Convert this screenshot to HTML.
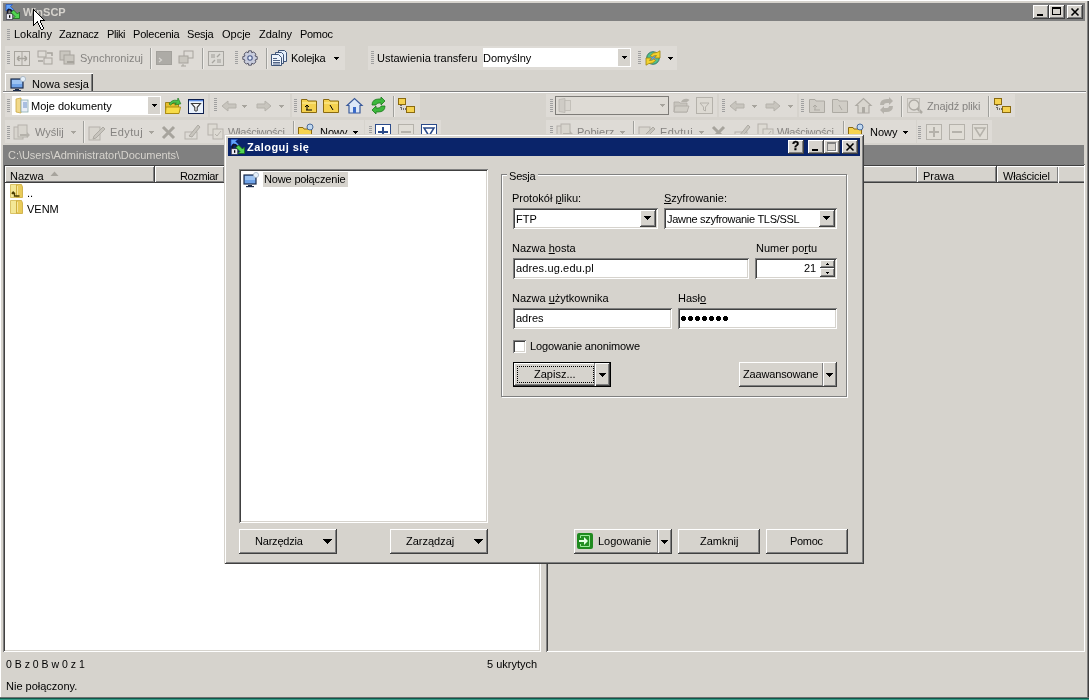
<!DOCTYPE html>
<html><head><meta charset="utf-8">
<style>
*{box-sizing:border-box;margin:0;padding:0}
html,body{width:1089px;height:700px;overflow:hidden;background:#D6D3CD;font-family:"Liberation Sans",sans-serif;font-size:11px;color:#000}
.a{position:absolute}
.t{position:absolute;white-space:nowrap;line-height:13px;will-change:transform}
.raised{position:absolute;background:#D6D3CD;box-shadow:inset -1px -1px #404040,inset 1px 1px #fff,inset -2px -2px #808080,inset 2px 2px #D6D3CD}
.sunk{position:absolute;background:#fff;box-shadow:inset 1px 1px #808080,inset -1px -1px #fff,inset 2px 2px #404040,inset -2px -2px #D6D3CD}
.g{color:#858380}
.grip{position:absolute;width:3px;background:repeating-linear-gradient(#A0A0A0 0 1px,transparent 1px 2px)}
.vsep{position:absolute;width:2px;border-left:1px solid #A0A09C;border-right:1px solid #EEECE8}
.tb{position:absolute;background:#DEDBD6}
.arr{position:absolute;width:0;height:0;border-left:3px solid transparent;border-right:3px solid transparent;border-top:3px solid #000}
.arrg{position:absolute;width:0;height:0;border-left:3px solid transparent;border-right:3px solid transparent;border-top:3px solid #A7A49D}
.arr7{position:absolute;width:0;height:0;border-left:3.5px solid transparent;border-right:3.5px solid transparent;border-top:4px solid #000}
.hdr{position:absolute;background:#D6D3CD;box-shadow:inset -1px -1px #404040,inset 1px 1px #fff,inset -2px -2px #808080}
svg{position:absolute;overflow:visible}
</style></head><body>
<!-- window frame -->
<div class="a" style="left:0;top:0;width:1089px;height:700px;box-shadow:inset 1px 1px #fff,inset -1px 0 #404040,inset -2px 0 #808080"></div>
<!-- title bar -->
<div class="a" style="left:3px;top:3px;width:1082px;height:18px;background:#808080"></div>
<svg style="left:5px;top:4px" width="16" height="16" viewBox="0 0 16 16"><path d="M1 0.5 L7.5 0.5 L5.5 2.5 L8.5 5.5 L6.5 7.5 L3.5 4.5 L1 7Z" fill="#62A4FA" stroke="#2050C0" stroke-width="0.7"/><path d="M2.5 10 V8 Q2.5 5.5 4.5 5.5 Q6.5 5.5 6.5 8 V10" stroke="#141428" stroke-width="1.6" fill="none"/><rect x="1.3" y="9.8" width="6.4" height="5.6" fill="#ECECF6" stroke="#2a2a3a" stroke-width="0.6"/><rect x="4" y="11.2" width="1.3" height="2.6" fill="#000"/><path d="M8.5 6 L12.5 10 L14.5 8 L14.5 14.5 L8 14.5 L10 12.5 L6 8.5Z" fill="#52D452" stroke="#1A6A1A" stroke-width="0.8"/></svg>
<div class="t" style="left:23px;top:6px;font-weight:bold;font-size:11px;color:#D6D3CD">WinSCP</div>
<div class="raised" style="left:1033px;top:5px;width:16px;height:14px"></div>
<div class="a" style="left:1037px;top:14px;width:6px;height:2px;background:#000"></div>
<div class="raised" style="left:1049px;top:5px;width:16px;height:14px"></div>
<div class="a" style="left:1052px;top:7px;width:9px;height:8px;border:1px solid #000;border-top-width:2px"></div>
<div class="raised" style="left:1067px;top:5px;width:16px;height:14px"></div>
<svg style="left:1067px;top:5px" width="16" height="14"><path d="M4.5 3.5 L11.5 10.5 M11.5 3.5 L4.5 10.5" stroke="#000" stroke-width="1.6"/></svg>


<!-- menu -->
<div class="grip" style="left:7px;top:29px;height:11px"></div>
<div class="t" style="left:14px;top:28px">Lokalny</div>
<div class="t" style="left:59px;top:28px;letter-spacing:-0.25px">Zaznacz</div>
<div class="t" style="left:107px;top:28px;letter-spacing:-0.42px">Pliki</div>
<div class="t" style="left:133px;top:28px;letter-spacing:-0.2px">Polecenia</div>
<div class="t" style="left:187px;top:28px;letter-spacing:-0.2px">Sesja</div>
<div class="t" style="left:222px;top:28px">Opcje</div>
<div class="t" style="left:259px;top:28px">Zdalny</div>
<div class="t" style="left:300px;top:28px;letter-spacing:-0.3px">Pomoc</div>

<!-- main toolbar -->
<div class="tb" style="left:5px;top:46px;width:340px;height:24px"></div>
<div class="grip" style="left:7px;top:51px;height:13px"></div>
<svg style="left:14px;top:51px" width="16" height="15"><rect x="0.5" y="0.5" width="15" height="14" fill="none" stroke="#A7A49D"/><path d="M8 1 V14" stroke="#A7A49D"/><path d="M3 7.5 H13 M3 7.5 L5.5 5 M3 7.5 L5.5 10 M13 7.5 L10.5 5 M13 7.5 L10.5 10" stroke="#A7A49D" stroke-width="1.5" fill="none"/></svg>
<svg style="left:37px;top:50px" width="17" height="16"><rect x="1" y="1" width="8" height="6" fill="none" stroke="#A7A49D"/><rect x="7" y="8" width="8" height="6" fill="none" stroke="#A7A49D"/><path d="M10 3 H15 V6 M1 11 H6" stroke="#A7A49D" stroke-width="1.5" fill="none"/></svg>
<svg style="left:59px;top:50px" width="17" height="16"><rect x="1" y="1" width="10" height="9" fill="#C9C6BF" stroke="#A7A49D"/><rect x="5" y="5" width="10" height="9" fill="#C9C6BF" stroke="#A7A49D"/><path d="M8 12 L15 12" stroke="#A7A49D" stroke-width="2"/></svg>
<div class="t g" style="left:80px;top:52px">Synchronizuj</div>
<div class="vsep" style="left:150px;top:48px;height:21px"></div>
<svg style="left:156px;top:51px" width="16" height="14"><rect x="0" y="0" width="16" height="14" fill="#ADABA6"/><rect x="0.5" y="0.5" width="15" height="13" fill="none" stroke="#A3A19C"/><path d="M3 7 L5.5 9 L3 11" stroke="#D8D6D2" stroke-width="1.2" fill="none"/></svg>
<svg style="left:178px;top:50px" width="17" height="16"><rect x="6" y="1" width="9" height="7" fill="none" stroke="#A7A49D"/><rect x="1" y="6" width="9" height="7" fill="#C9C6BF" stroke="#A7A49D"/><path d="M5 14 V16 M3 16 H8" stroke="#A7A49D"/></svg>
<div class="vsep" style="left:202px;top:48px;height:21px"></div>
<svg style="left:208px;top:51px" width="16" height="15"><rect x="0.5" y="0.5" width="15" height="14" fill="#DCDAD5" stroke="#A7A5A0"/><path d="M3 3 H7 V7 H3Z M9 8 H13 V12 H9Z" fill="#BDBBB6"/><path d="M4 12 L7 9 M9 6 L12 3" stroke="#A7A5A0" stroke-width="1.4"/></svg>
<div class="grip" style="left:235px;top:51px;height:13px"></div>
<svg style="left:242px;top:50px" width="16" height="16" viewBox="0 0 16 16"><path d="M6.6 0.8 H9.4 L9.8 2.8 L11.7 1.9 L13.9 4.1 L13 6 L15.2 6.6 V9.4 L13 10 L13.9 11.9 L11.7 14.1 L9.8 13.2 L9.4 15.2 H6.6 L6.2 13.2 L4.3 14.1 L2.1 11.9 L3 10 L0.8 9.4 V6.6 L3 6 L2.1 4.1 L4.3 1.9 L6.2 2.8Z" fill="#C9CDDD" stroke="#4C4C5E" stroke-width="0.9"/><circle cx="8" cy="8" r="2.2" fill="#E4ECFA" stroke="#4A5A8A" stroke-width="1.1"/></svg>
<div class="vsep" style="left:266px;top:48px;height:21px"></div>
<svg style="left:271px;top:50px" width="17" height="16" viewBox="0 0 17 16"><path d="M7.5 0.5 H13.5 L15.5 2.5 V11.5 H7.5Z" fill="#E4EEFA" stroke="#3E5478"/><path d="M4.5 2.5 H10.5 L12.5 4.5 V13.5 H4.5Z" fill="#E8F0FB" stroke="#3E5478"/><path d="M0.5 4.5 H7.5 L10.5 7.5 V15.5 H0.5Z" fill="#EEF4FC" stroke="#3E5478"/><path d="M2 8.5 H6 M2 10.5 H9 M2 12.5 H9 M2 14 H9" stroke="#3E5478" stroke-width="0.9"/></svg>
<div class="t" style="left:291px;top:52px;letter-spacing:-0.25px">Kolejka</div>
<svg style="left:334px;top:57px" width="5" height="3" shape-rendering="crispEdges"><g fill="#000"><rect x="0" y="0" width="5" height="1"/><rect x="1" y="1" width="3" height="1"/><rect x="2" y="2" width="1" height="1"/></g></svg>

<div class="tb" style="left:368px;top:46px;width:309px;height:24px"></div>
<div class="grip" style="left:371px;top:51px;height:13px"></div>
<div class="t" style="left:377px;top:52px">Ustawienia transferu</div>
<div class="a" style="left:483px;top:48px;width:148px;height:19px;background:#fff"></div>
<div class="a" style="left:618px;top:49px;width:12px;height:17px;background:#D6D3CD"></div>
<svg style="left:622px;top:56px" width="5" height="3" shape-rendering="crispEdges"><g fill="#000"><rect x="0" y="0" width="5" height="1"/><rect x="1" y="1" width="3" height="1"/><rect x="2" y="2" width="1" height="1"/></g></svg>
<div class="t" style="left:483px;top:52px">Domyślny</div>
<div class="grip" style="left:638px;top:51px;height:13px"></div>
<svg style="left:645px;top:50px" width="16" height="16" viewBox="0 0 16 16"><circle cx="8" cy="8" r="6.3" fill="#52C08A" stroke="#2E6E64" stroke-width="0.9"/><ellipse cx="8.2" cy="8.3" rx="2.8" ry="3.8" fill="#5AA2F0" transform="rotate(25 8 8)"/><path d="M5.5 5.5 Q8 2.2 12.5 2.3 L15 0.8 V8 H9.5 L11.5 5.6 Q8.5 5.4 7 7.2Z" fill="#F4D22E" stroke="#9C8410" stroke-width="0.8"/><path d="M10.5 10.5 Q8 13.8 3.5 13.7 L1 15.2 V8 H6.5 L4.5 10.4 Q7.5 10.6 9 8.8Z" fill="#F4D22E" stroke="#9C8410" stroke-width="0.8"/></svg>
<svg style="left:668px;top:57px" width="5" height="3" shape-rendering="crispEdges"><g fill="#000"><rect x="0" y="0" width="5" height="1"/><rect x="1" y="1" width="3" height="1"/><rect x="2" y="2" width="1" height="1"/></g></svg>

<!-- tabs -->
<div class="a" style="left:5px;top:73px;width:88px;height:18px;background:#D6D3CD;box-shadow:inset 1px 1px #fff,inset -1px 0 #404040,inset -2px 0 #808080"></div>
<svg style="left:10px;top:76px" width="18" height="16" viewBox="0 0 18 16"><rect x="1" y="3" width="12" height="9" fill="#6FA3E8" stroke="#1B2B4A" stroke-width="1.2"/><rect x="2" y="4" width="10" height="4" fill="#9CC3F2"/><rect x="5" y="13" width="4" height="1" fill="#1B2B4A"/><rect x="3" y="14" width="8" height="1.2" fill="#1B2B4A"/><circle cx="13" cy="3" r="2.6" fill="#E6F0FA" stroke="#9AB" stroke-width=".7"/></svg>
<div class="t" style="left:32px;top:78px">Nowa sesja</div>
<div class="a" style="left:3px;top:91px;width:1083px;height:1px;background:#808080"></div>
<div class="a" style="left:3px;top:92px;width:1083px;height:1px;background:#fff"></div>


<!-- local panel toolbars -->
<div class="tb" style="left:5px;top:94px;width:203px;height:23px"></div>
<div class="grip" style="left:7px;top:99px;height:13px"></div>
<div class="a" style="left:12px;top:96px;width:149px;height:19px;background:#fff"></div>
<div class="a" style="left:148px;top:97px;width:12px;height:17px;background:#D6D3CD"></div>
<svg style="left:152px;top:104px" width="5" height="3" shape-rendering="crispEdges"><g fill="#000"><rect x="0" y="0" width="5" height="1"/><rect x="1" y="1" width="3" height="1"/><rect x="2" y="2" width="1" height="1"/></g></svg>
<svg style="left:15px;top:97px" width="14" height="17" viewBox="0 0 14 17"><path d="M1 2 L6 1 L6 16 L1 15Z" fill="#F2D98A" stroke="#C9A640" stroke-width=".8"/><rect x="6" y="3" width="7" height="12" fill="#E8EEF8" stroke="#8AA" stroke-width=".8"/><path d="M8 6H12M8 8H12M8 10H12" stroke="#6A8FC8"/></svg>
<div class="t" style="left:31px;top:100px">Moje dokumenty</div>
<svg style="left:165px;top:97px" width="17" height="17" viewBox="0 0 17 17"><path d="M0.5 5.5 L5 5.5 L6 6.5 L13.5 6.5 L13.5 16.5 L0.5 16.5Z" fill="#E6BE2E" stroke="#9A7A10" stroke-width="0.9"/><path d="M1 10 L15.5 10 L14 16.5 L0.5 16.5Z" fill="#F8DC48" stroke="#A8880F" stroke-width="0.9"/><path d="M4 7 Q7 2 12.5 3.5 L13 1 L15.8 6.8 L9.8 8 L11.3 5.8 Q8 5 5.5 8Z" fill="#4CC04C" stroke="#1E7A1E" stroke-width="0.7"/></svg>
<svg style="left:188px;top:99px" width="16" height="15" viewBox="0 0 16 15"><rect x="0.5" y="0.5" width="15" height="14" fill="#EAF2FC" stroke="#0C1E4E"/><rect x="1" y="1" width="14" height="1.3" fill="#5A8AE0"/><path d="M3.5 4.5 H12.5 L9.2 8.3 V11.5 Q8 12.8 6.8 11.5 V8.3Z" fill="#FAFAFA" stroke="#3a3a3a" stroke-width="1.1"/></svg>
<div class="tb" style="left:210px;top:94px;width:80px;height:23px"></div>
<div class="grip" style="left:214px;top:98px;height:13px"></div>
<svg style="left:221px;top:100px" width="16" height="12"><path d="M1 6 L7 1 L7 4 L15 4 L15 8 L7 8 L7 11Z" fill="#C8C5BE" stroke="#B5B2AB"/></svg>
<svg style="left:242px;top:105px" width="5" height="3" shape-rendering="crispEdges"><g fill="#A7A49D"><rect x="0" y="0" width="5" height="1"/><rect x="1" y="1" width="3" height="1"/><rect x="2" y="2" width="1" height="1"/></g></svg>
<svg style="left:256px;top:100px" width="16" height="12"><path d="M15 6 L9 1 L9 4 L1 4 L1 8 L9 8 L9 11Z" fill="#C8C5BE" stroke="#B5B2AB"/></svg>
<svg style="left:279px;top:105px" width="5" height="3" shape-rendering="crispEdges"><g fill="#A7A49D"><rect x="0" y="0" width="5" height="1"/><rect x="1" y="1" width="3" height="1"/><rect x="2" y="2" width="1" height="1"/></g></svg>
<div class="tb" style="left:292px;top:94px;width:128px;height:23px"></div>
<div class="grip" style="left:294px;top:99px;height:13px"></div>
<svg style="left:301px;top:98px" width="16" height="15" viewBox="0 0 16 15"><path d="M0.5 1.5 L6 1.5 L7 3 L15.5 3 L15.5 14.5 L0.5 14.5Z" fill="#F5D250" stroke="#8A6A10"/><path d="M1 5 H15" stroke="#FFF0A0"/><path d="M5 12 H11 M6 8 L6 12 M4 9 L6 7 L8 9" stroke="#000" fill="none"/></svg>
<svg style="left:323px;top:98px" width="16" height="15" viewBox="0 0 16 15"><path d="M0.5 1.5 L6 1.5 L7 3 L15.5 3 L15.5 14.5 L0.5 14.5Z" fill="#F5D250" stroke="#8A6A10"/><path d="M1 5 H15" stroke="#FFF0A0"/><path d="M7 7 L10 12" stroke="#000"/></svg>
<svg style="left:346px;top:97px" width="17" height="17" viewBox="0 0 17 17"><path d="M1 8.5 L8.5 1.5 L16 8.5 L14 8.5 L14 16 L3 16 L3 8.5Z" fill="#DDE8F8" stroke="#3A5A9A" stroke-width="1.2"/><rect x="7" y="10" width="3" height="6" fill="#3A6AC8"/></svg>
<svg style="left:370px;top:97px" width="17" height="17" viewBox="0 0 17 17"><path d="M2 8 Q2 2 9 2 L11 2 L11 0 L15 4 L11 8 L11 6 L9 6 Q6 6 6 8Z" fill="#3CB83C" stroke="#1A7A1A" stroke-width=".8"/><path d="M15 9 Q15 15 8 15 L6 15 L6 17 L2 13 L6 9 L6 11 L8 11 Q11 11 11 9Z" fill="#3CB83C" stroke="#1A7A1A" stroke-width=".8"/></svg>
<div class="vsep" style="left:393px;top:96px;height:21px"></div>
<svg style="left:398px;top:98px" width="17" height="16" viewBox="0 0 17 16"><rect x="0.5" y="0.5" width="7" height="6" fill="#F5D250" stroke="#8A6A10"/><rect x="8.5" y="8.5" width="8" height="6" fill="#F5D250" stroke="#8A6A10"/><path d="M3 7 V11 H8" stroke="#000" stroke-dasharray="1 1" fill="none"/></svg>

<div class="tb" style="left:5px;top:120px;width:359px;height:23px"></div>
<div class="tb" style="left:365px;top:120px;width:76px;height:23px"></div>
<div class="grip" style="left:7px;top:126px;height:13px"></div>
<svg style="left:13px;top:124px" width="17" height="17" viewBox="0 0 17 17"><rect x="1" y="3" width="9" height="12" fill="#D8D5CE" stroke="#B5B2AB"/><rect x="5" y="1" width="9" height="12" fill="#D8D5CE" stroke="#B5B2AB"/><path d="M7 10 L14 10 L14 8 L17 11 L14 14 L14 12 L7 12Z" fill="#B5B2AB"/></svg>
<div class="t g" style="left:35px;top:126px">Wyślij</div>
<svg style="left:71px;top:131px" width="5" height="3" shape-rendering="crispEdges"><g fill="#A7A49D"><rect x="0" y="0" width="5" height="1"/><rect x="1" y="1" width="3" height="1"/><rect x="2" y="2" width="1" height="1"/></g></svg>
<div class="vsep" style="left:83px;top:121px;height:22px"></div>
<svg style="left:88px;top:124px" width="17" height="17" viewBox="0 0 17 17"><rect x="1" y="3" width="11" height="13" fill="#D8D5CE" stroke="#B5B2AB"/><path d="M6 12 L15 3 L17 5 L8 14 L5 15Z" fill="#C8C5BE" stroke="#ADAAA3"/></svg>
<div class="t g" style="left:110px;top:126px;letter-spacing:0.4px">Edytuj</div>
<svg style="left:149px;top:131px" width="5" height="3" shape-rendering="crispEdges"><g fill="#A7A49D"><rect x="0" y="0" width="5" height="1"/><rect x="1" y="1" width="3" height="1"/><rect x="2" y="2" width="1" height="1"/></g></svg>
<svg style="left:161px;top:125px" width="15" height="15"><path d="M2 2 L13 13 M13 2 L2 13" stroke="#A7A49D" stroke-width="3"/></svg>
<svg style="left:184px;top:123px" width="17" height="17"><rect x="1" y="9" width="12" height="7" fill="none" stroke="#B5B2AB"/><path d="M5 13 L14 2 L16 4 L8 14Z" fill="#C8C5BE" stroke="#ADAAA3"/></svg>
<svg style="left:207px;top:123px" width="17" height="17"><rect x="1" y="1" width="9" height="11" fill="#DDDAD3" stroke="#B5B2AB"/><rect x="6" y="6" width="10" height="10" fill="#DDDAD3" stroke="#B5B2AB"/><path d="M8 11 L10 13 L14 8" stroke="#B5B2AB" fill="none"/></svg>
<div class="t g" style="left:228px;top:126px;letter-spacing:-0.3px">Właściwości</div>
<div class="vsep" style="left:293px;top:121px;height:22px"></div>
<svg style="left:298px;top:123px" width="17" height="16" viewBox="0 0 17 16"><path d="M0.5 4.5 L5 4.5 L6 6 L13.5 6 L13.5 15.5 L0.5 15.5Z" fill="#F5D250" stroke="#8A6A10"/><circle cx="12" cy="4" r="3" fill="#C0D8F0" stroke="#4A6A9A"/></svg>
<div class="t" style="left:320px;top:126px">Nowy</div>
<svg style="left:353px;top:131px" width="5" height="3" shape-rendering="crispEdges"><g fill="#000"><rect x="0" y="0" width="5" height="1"/><rect x="1" y="1" width="3" height="1"/><rect x="2" y="2" width="1" height="1"/></g></svg>
<div class="grip" style="left:369px;top:126px;height:13px"></div>
<svg style="left:375px;top:124px" width="16" height="16"><rect x="0.5" y="0.5" width="15" height="15" fill="#fff" stroke="#2A4A8A"/><path d="M8 3 V13 M3 8 H13" stroke="#2A4A8A" stroke-width="2"/></svg>
<svg style="left:398px;top:124px" width="16" height="16"><rect x="0.5" y="0.5" width="15" height="15" fill="#E0DDD6" stroke="#B5B2AB"/><path d="M3 8 H13" stroke="#B5B2AB" stroke-width="2"/></svg>
<svg style="left:421px;top:124px" width="16" height="16"><rect x="0.5" y="0.5" width="15" height="15" fill="#fff" stroke="#2A4A8A"/><path d="M3 4 L13 4 L8 12Z" fill="none" stroke="#2A4A8A" stroke-width="1.5"/></svg>

<!-- remote panel toolbars -->
<div class="tb" style="left:546px;top:94px;width:171px;height:23px"></div>
<div class="grip" style="left:550px;top:99px;height:13px"></div>
<div class="a" style="left:555px;top:96px;width:114px;height:19px;border:1px solid #7E7C78;background:#DEDBD5"></div>
<svg style="left:660px;top:104px" width="5" height="3" shape-rendering="crispEdges"><g fill="#A7A49D"><rect x="0" y="0" width="5" height="1"/><rect x="1" y="1" width="3" height="1"/><rect x="2" y="2" width="1" height="1"/></g></svg>
<svg style="left:558px;top:98px" width="14" height="15" viewBox="0 0 14 15"><path d="M1 1.5 L7 0.5 L7 14.5 L1 13.5Z" fill="#CFCCC6" stroke="#B9B6B0" stroke-width=".8"/><rect x="7" y="2.5" width="5.5" height="10" fill="#D8D5CF" stroke="#BDBAB4" stroke-width=".8"/></svg>
<svg style="left:673px;top:97px" width="17" height="17" viewBox="0 0 17 17"><path d="M1 5 L6 5 L7 6 L14 6 L14 15 L1 15Z" fill="#C8C5BE" stroke="#ADAAA3" stroke-width=".8"/><path d="M2 9 L16 9 L14 15 L1 15Z" fill="#D0CDC6" stroke="#ADAAA3" stroke-width=".8"/><path d="M8 5 Q10 1 15 2 L16.5 3 L14 5Z" fill="#B5B2AB"/></svg>
<svg style="left:696px;top:97px" width="17" height="17"><rect x="0.5" y="0.5" width="16" height="16" fill="#DDDAD3" stroke="#B5B2AB"/><path d="M4 6 L13 6 L9.5 10 L9.5 14 L7.5 13 L7.5 10Z" fill="none" stroke="#B5B2AB"/></svg>
<div class="tb" style="left:719px;top:94px;width:78px;height:23px"></div>
<div class="grip" style="left:722px;top:99px;height:13px"></div>
<svg style="left:729px;top:100px" width="16" height="12"><path d="M1 6 L7 1 L7 4 L15 4 L15 8 L7 8 L7 11Z" fill="#C8C5BE" stroke="#B5B2AB"/></svg>
<svg style="left:752px;top:105px" width="5" height="3" shape-rendering="crispEdges"><g fill="#A7A49D"><rect x="0" y="0" width="5" height="1"/><rect x="1" y="1" width="3" height="1"/><rect x="2" y="2" width="1" height="1"/></g></svg>
<svg style="left:765px;top:100px" width="16" height="12"><path d="M15 6 L9 1 L9 4 L1 4 L1 8 L9 8 L9 11Z" fill="#C8C5BE" stroke="#B5B2AB"/></svg>
<svg style="left:788px;top:105px" width="5" height="3" shape-rendering="crispEdges"><g fill="#A7A49D"><rect x="0" y="0" width="5" height="1"/><rect x="1" y="1" width="3" height="1"/><rect x="2" y="2" width="1" height="1"/></g></svg>
<div class="tb" style="left:799px;top:94px;width:216px;height:23px"></div>
<div class="grip" style="left:801px;top:99px;height:13px"></div>
<svg style="left:809px;top:98px" width="16" height="15"><path d="M0.5 1.5 L6 1.5 L7 3 L15.5 3 L15.5 14.5 L0.5 14.5Z" fill="#D0CDC6" stroke="#ADAAA3"/><path d="M5 12 H11 M6 8 L6 12 M4 9 L6 7 L8 9" stroke="#ADAAA3" fill="none"/></svg>
<svg style="left:832px;top:98px" width="16" height="15"><path d="M0.5 1.5 L6 1.5 L7 3 L15.5 3 L15.5 14.5 L0.5 14.5Z" fill="#D0CDC6" stroke="#ADAAA3"/><path d="M7 7 L10 12" stroke="#ADAAA3"/></svg>
<svg style="left:855px;top:97px" width="17" height="17"><path d="M1 8.5 L8.5 1.5 L16 8.5 L14 8.5 L14 16 L3 16 L3 8.5Z" fill="#D8D5CE" stroke="#ADAAA3" stroke-width="1.2"/><rect x="7" y="10" width="3" height="6" fill="#ADAAA3"/></svg>
<svg style="left:878px;top:97px" width="17" height="17"><path d="M2 8 Q2 2 9 2 L11 2 L11 0 L15 4 L11 8 L11 6 L9 6 Q6 6 6 8Z" fill="#B5B2AB"/><path d="M15 9 Q15 15 8 15 L6 15 L6 17 L2 13 L6 9 L6 11 L8 11 Q11 11 11 9Z" fill="#B5B2AB"/></svg>
<div class="vsep" style="left:901px;top:96px;height:21px"></div>
<svg style="left:907px;top:98px" width="17" height="17"><circle cx="7" cy="7" r="5" fill="#E0DDD6" stroke="#ADAAA3" stroke-width="1.3"/><path d="M10.5 10.5 L15 15" stroke="#ADAAA3" stroke-width="2.5"/><rect x="0.5" y="0.5" width="12" height="14" fill="none" stroke="#C0BDB6"/></svg>
<div class="t g" style="left:927px;top:100px;letter-spacing:-0.15px">Znajdź pliki</div>
<div class="vsep" style="left:988px;top:96px;height:21px"></div>
<svg style="left:994px;top:98px" width="17" height="16"><rect x="0.5" y="0.5" width="7" height="6" fill="#F5D250" stroke="#8A6A10"/><rect x="8.5" y="8.5" width="8" height="6" fill="#F5D250" stroke="#8A6A10"/><path d="M3 7 V11 H8" stroke="#000" stroke-dasharray="1 1" fill="none"/></svg>

<div class="tb" style="left:546px;top:120px;width:370px;height:23px"></div>
<div class="grip" style="left:550px;top:126px;height:13px"></div>
<svg style="left:556px;top:123px" width="17" height="17"><rect x="1" y="3" width="9" height="12" fill="#D8D5CE" stroke="#B5B2AB"/><rect x="5" y="1" width="9" height="12" fill="#D8D5CE" stroke="#B5B2AB"/><path d="M7 10 L14 10 L14 8 L17 11 L14 14 L14 12 L7 12Z" fill="#B5B2AB"/></svg>
<div class="t g" style="left:577px;top:126px">Pobierz</div>
<svg style="left:620px;top:131px" width="5" height="3" shape-rendering="crispEdges"><g fill="#A7A49D"><rect x="0" y="0" width="5" height="1"/><rect x="1" y="1" width="3" height="1"/><rect x="2" y="2" width="1" height="1"/></g></svg>
<div class="vsep" style="left:633px;top:121px;height:22px"></div>
<svg style="left:638px;top:124px" width="17" height="17"><rect x="1" y="3" width="11" height="13" fill="#D8D5CE" stroke="#B5B2AB"/><path d="M6 12 L15 3 L17 5 L8 14 L5 15Z" fill="#C8C5BE" stroke="#ADAAA3"/></svg>
<div class="t g" style="left:660px;top:126px;letter-spacing:0.4px">Edytuj</div>
<svg style="left:699px;top:131px" width="5" height="3" shape-rendering="crispEdges"><g fill="#A7A49D"><rect x="0" y="0" width="5" height="1"/><rect x="1" y="1" width="3" height="1"/><rect x="2" y="2" width="1" height="1"/></g></svg>
<svg style="left:711px;top:125px" width="15" height="15"><path d="M2 2 L13 13 M13 2 L2 13" stroke="#A7A49D" stroke-width="3"/></svg>
<svg style="left:734px;top:123px" width="17" height="17"><rect x="1" y="9" width="12" height="7" fill="none" stroke="#B5B2AB"/><path d="M5 13 L14 2 L16 4 L8 14Z" fill="#C8C5BE" stroke="#ADAAA3"/></svg>
<svg style="left:757px;top:123px" width="17" height="17"><rect x="1" y="1" width="9" height="11" fill="#DDDAD3" stroke="#B5B2AB"/><rect x="6" y="6" width="10" height="10" fill="#DDDAD3" stroke="#B5B2AB"/><path d="M8 11 L10 13 L14 8" stroke="#B5B2AB" fill="none"/></svg>
<div class="t g" style="left:777px;top:126px;letter-spacing:-0.3px">Właściwości</div>
<div class="vsep" style="left:843px;top:121px;height:22px"></div>
<svg style="left:848px;top:123px" width="17" height="16"><path d="M0.5 4.5 L5 4.5 L6 6 L13.5 6 L13.5 15.5 L0.5 15.5Z" fill="#F5D250" stroke="#8A6A10"/><circle cx="12" cy="4" r="3" fill="#C0D8F0" stroke="#4A6A9A"/></svg>
<div class="t" style="left:870px;top:126px">Nowy</div>
<svg style="left:903px;top:131px" width="5" height="3" shape-rendering="crispEdges"><g fill="#000"><rect x="0" y="0" width="5" height="1"/><rect x="1" y="1" width="3" height="1"/><rect x="2" y="2" width="1" height="1"/></g></svg>
<div class="tb" style="left:917px;top:120px;width:75px;height:23px"></div>
<div class="grip" style="left:918px;top:126px;height:13px"></div>
<svg style="left:926px;top:124px" width="16" height="16"><rect x="0.5" y="0.5" width="15" height="15" fill="#E0DDD6" stroke="#B5B2AB"/><path d="M8 3 V13 M3 8 H13" stroke="#B5B2AB" stroke-width="2"/></svg>
<svg style="left:949px;top:124px" width="16" height="16"><rect x="0.5" y="0.5" width="15" height="15" fill="#E0DDD6" stroke="#B5B2AB"/><path d="M3 8 H13" stroke="#B5B2AB" stroke-width="2"/></svg>
<svg style="left:972px;top:124px" width="16" height="16"><rect x="0.5" y="0.5" width="15" height="15" fill="#E0DDD6" stroke="#B5B2AB"/><path d="M3 4 L13 4 L8 12Z" fill="none" stroke="#B5B2AB" stroke-width="1.5"/></svg>

<!-- path bars -->
<div class="a" style="left:3px;top:145px;width:538px;height:20px;background:#808080"></div>
<div class="t" style="left:8px;top:149px;color:#D6D3CD;letter-spacing:-0.04px">C:\Users\Administrator\Documents\</div>
<div class="a" style="left:546px;top:145px;width:538px;height:20px;background:#808080"></div>

<!-- local list -->
<div class="sunk" style="left:3px;top:164px;width:538px;height:488px"></div>
<div class="hdr" style="left:5px;top:166px;width:150px;height:17px"></div>
<div class="t" style="left:10px;top:170px">Nazwa</div>
<svg style="left:50px;top:171px" width="9" height="6"><path d="M4.5 0.5 L8.5 5 L0.5 5Z" fill="#A7A49D"/></svg>
<div class="hdr" style="left:155px;top:166px;width:70px;height:17px"></div>
<div class="t" style="left:180px;top:170px;letter-spacing:-0.37px">Rozmiar</div>
<div class="hdr" style="left:225px;top:166px;width:314px;height:17px"></div>
<svg style="left:9px;top:183px" width="16" height="16" viewBox="0 0 16 16"><path d="M1.5 1.5 L7.5 1.5 L7.5 14.5 L1.5 14.5Z" fill="#F3E796" stroke="#D2B84E" stroke-width="0.8"/><path d="M7.5 1.5 L12.5 1.5 L13.5 4 L13.5 14.5 L7.5 14.5Z" fill="#E9CB5A" stroke="#C9A83A" stroke-width="0.8"/><path d="M8.5 3 V13" stroke="#F6E7A0" stroke-width="1"/><path d="M3 10.5 H5.5 V13 H10.5" fill="none" stroke="#4A3C00" stroke-width="1.3"/><path d="M2 10.5 L4.2 8 L6.4 10.5Z" fill="#4A3C00"/></svg>
<div class="t" style="left:27px;top:187px">..</div>
<svg style="left:9px;top:199px" width="16" height="16" viewBox="0 0 16 16"><path d="M1.5 1.5 L7.5 1.5 L7.5 14.5 L1.5 14.5Z" fill="#F3E796" stroke="#D2B84E" stroke-width="0.8"/><path d="M7.5 1.5 L12.5 1.5 L13.5 4 L13.5 14.5 L7.5 14.5Z" fill="#E9CB5A" stroke="#C9A83A" stroke-width="0.8"/><path d="M8.5 3 V13" stroke="#F6E7A0" stroke-width="1"/></svg>
<div class="t" style="left:27px;top:203px">VENM</div>

<!-- remote list -->
<div class="a" style="left:546px;top:164px;width:539px;height:488px;box-shadow:inset 1px 1px #808080,inset -1px -1px #fff,inset 2px 2px #404040,inset -2px -2px #D6D3CD"></div>
<div class="hdr" style="left:548px;top:166px;width:370px;height:17px"></div>
<div class="hdr" style="left:917px;top:166px;width:80px;height:17px"></div>
<div class="t" style="left:923px;top:170px">Prawa</div>
<div class="hdr" style="left:997px;top:166px;width:62px;height:17px"></div>
<div class="t" style="left:1003px;top:170px;letter-spacing:-0.22px">Właściciel</div>
<div class="a" style="left:1058px;top:166px;width:26px;height:17px;box-shadow:inset 1px 1px #fff,inset 0 -1px #404040,inset 0 -2px #808080"></div>


<!-- dialog -->
<div class="a" style="left:224px;top:134px;width:640px;height:430px;background:#D6D3CD;box-shadow:inset 1px 1px #D6D3CD,inset -1px -1px #404040,inset 2px 2px #fff,inset -2px -2px #808080"></div>
<div class="a" style="left:228px;top:138px;width:632px;height:18px;background:#0A246A"></div>
<svg style="left:230px;top:139px" width="16" height="16" viewBox="0 0 16 16"><path d="M1 0.5 L7.5 0.5 L5.5 2.5 L8.5 5.5 L6.5 7.5 L3.5 4.5 L1 7Z" fill="#62A4FA" stroke="#2050C0" stroke-width="0.7"/><path d="M2.5 10 V8 Q2.5 5.5 4.5 5.5 Q6.5 5.5 6.5 8 V10" stroke="#141428" stroke-width="1.6" fill="none"/><rect x="1.3" y="9.8" width="6.4" height="5.6" fill="#ECECF6" stroke="#2a2a3a" stroke-width="0.6"/><rect x="4" y="11.2" width="1.3" height="2.6" fill="#000"/><path d="M8.5 6 L12.5 10 L14.5 8 L14.5 14.5 L8 14.5 L10 12.5 L6 8.5Z" fill="#52D452" stroke="#1A6A1A" stroke-width="0.8"/></svg>
<div class="t" style="left:247px;top:141px;font-weight:bold;font-size:11px;color:#fff;letter-spacing:0.45px">Zaloguj się</div>
<div class="raised" style="left:788px;top:140px;width:16px;height:14px"></div>
<div class="t" style="left:792px;top:140px;font-weight:bold;font-size:12px;-webkit-text-stroke:0.3px #000">?</div>
<div class="raised" style="left:808px;top:140px;width:16px;height:14px"></div>
<div class="a" style="left:812px;top:149px;width:6px;height:2px;background:#000"></div>
<div class="raised" style="left:824px;top:140px;width:16px;height:14px"></div>
<div class="a" style="left:827px;top:142px;width:9px;height:9px;border:1px solid #808080;border-top-width:2px;box-shadow:1px 1px #fff"></div>
<div class="raised" style="left:842px;top:140px;width:16px;height:14px"></div>
<svg style="left:842px;top:140px" width="16" height="14"><path d="M4.5 3.5 L11.5 10.5 M11.5 3.5 L4.5 10.5" stroke="#000" stroke-width="1.6"/></svg>

<!-- tree -->
<div class="sunk" style="left:239px;top:169px;width:249px;height:354px"></div>
<div class="a" style="left:263px;top:172px;width:85px;height:15px;background:#D6D3CD"></div>
<svg style="left:243px;top:172px" width="18" height="16" viewBox="0 0 18 16"><rect x="1" y="3" width="12" height="9" fill="#6FA3E8" stroke="#1B2B4A" stroke-width="1.2"/><rect x="2" y="4" width="10" height="4" fill="#9CC3F2"/><rect x="5" y="13" width="4" height="1" fill="#1B2B4A"/><rect x="3" y="14" width="8" height="1.2" fill="#1B2B4A"/><circle cx="13" cy="3" r="2.6" fill="#E6F0FA" stroke="#9AB" stroke-width=".7"/></svg>
<div class="t" style="left:264px;top:173px;letter-spacing:-0.16px">Nowe połączenie</div>

<!-- group -->
<div class="a" style="left:501px;top:174px;width:346px;height:223px;border:1px solid #808080;box-shadow:inset 1px 1px #fff,1px 1px #fff"></div>
<div class="t" style="left:507px;top:170px;padding:0 2px;background:#D6D3CD;letter-spacing:-0.2px">Sesja</div>
<div class="t" style="left:512px;top:192px">Protokół <u>p</u>liku:</div>
<div class="sunk" style="left:513px;top:208px;width:145px;height:21px"></div>
<div class="raised" style="left:640px;top:210px;width:16px;height:17px"></div>
<svg style="left:644px;top:216px" width="7" height="4" shape-rendering="crispEdges"><g fill="#000"><rect x="0" y="0" width="7" height="1"/><rect x="1" y="1" width="5" height="1"/><rect x="2" y="2" width="3" height="1"/><rect x="3" y="3" width="1" height="1"/></g></svg>
<div class="t" style="left:516px;top:213px">FTP</div>
<div class="t" style="left:664px;top:192px"><u>S</u>zyfrowanie:</div>
<div class="sunk" style="left:664px;top:208px;width:173px;height:21px"></div>
<div class="raised" style="left:819px;top:210px;width:16px;height:17px"></div>
<svg style="left:823px;top:216px" width="7" height="4" shape-rendering="crispEdges"><g fill="#000"><rect x="0" y="0" width="7" height="1"/><rect x="1" y="1" width="5" height="1"/><rect x="2" y="2" width="3" height="1"/><rect x="3" y="3" width="1" height="1"/></g></svg>
<div class="t" style="left:667px;top:213px;letter-spacing:-0.3px">Jawne szyfrowanie TLS/SSL</div>

<div class="t" style="left:512px;top:242px">Nazwa <u>h</u>osta</div>
<div class="sunk" style="left:513px;top:258px;width:236px;height:21px"></div>
<div class="t" style="left:516px;top:262px;letter-spacing:0.14px">adres.ug.edu.pl</div>
<div class="t" style="left:756px;top:242px">Numer po<u>r</u>tu</div>
<div class="sunk" style="left:755px;top:258px;width:82px;height:21px"></div>
<div class="t" style="left:804px;top:262px">21</div>
<div class="raised" style="left:820px;top:260px;width:15px;height:8px"></div>
<div class="raised" style="left:820px;top:268px;width:15px;height:9px"></div>
<svg style="left:820px;top:260px" width="15" height="17" shape-rendering="crispEdges"><g fill="#000"><rect x="7" y="3" width="1" height="1"/><rect x="6" y="4" width="3" height="1"/><rect x="6" y="12" width="3" height="1"/><rect x="7" y="13" width="1" height="1"/></g></svg>

<div class="t" style="left:512px;top:292px">Nazwa <u>u</u>żytkownika</div>
<div class="sunk" style="left:513px;top:308px;width:159px;height:21px"></div>
<div class="t" style="left:516px;top:312px">adres</div>
<div class="t" style="left:678px;top:292px">Hasł<u>o</u></div>
<div class="sunk" style="left:678px;top:308px;width:159px;height:21px"></div>
<svg style="left:681px;top:316px" width="50" height="5" shape-rendering="crispEdges"><g fill="#000"><path d="M1 0h3v1h1v3h-1v1h-3v-1h-1v-3h1z"/><path d="M8 0h3v1h1v3h-1v1h-3v-1h-1v-3h1z"/><path d="M15 0h3v1h1v3h-1v1h-3v-1h-1v-3h1z"/><path d="M22 0h3v1h1v3h-1v1h-3v-1h-1v-3h1z"/><path d="M29 0h3v1h1v3h-1v1h-3v-1h-1v-3h1z"/><path d="M36 0h3v1h1v3h-1v1h-3v-1h-1v-3h1z"/><path d="M43 0h3v1h1v3h-1v1h-3v-1h-1v-3h1z"/></g></svg>

<div class="sunk" style="left:513px;top:340px;width:13px;height:13px"></div>
<div class="t" style="left:530px;top:340px;letter-spacing:-0.14px">Logowanie anonimowe</div>

<div class="a" style="left:513px;top:362px;width:98px;height:25px;border:1px solid #000"></div>
<div class="raised" style="left:514px;top:363px;width:96px;height:23px"></div>
<div class="a" style="left:594px;top:363px;width:2px;height:23px;border-left:1px solid #808080;border-right:1px solid #fff"></div>
<div class="a" style="left:517px;top:366px;width:77px;height:17px;border:1px dotted #000"></div>
<div class="t" style="left:534px;top:368px">Zapisz...</div>
<svg style="left:599px;top:373px" width="7" height="4" shape-rendering="crispEdges"><g fill="#000"><rect x="0" y="0" width="7" height="1"/><rect x="1" y="1" width="5" height="1"/><rect x="2" y="2" width="3" height="1"/><rect x="3" y="3" width="1" height="1"/></g></svg>

<div class="raised" style="left:739px;top:362px;width:98px;height:25px"></div>
<div class="a" style="left:822px;top:363px;width:2px;height:23px;border-left:1px solid #808080;border-right:1px solid #fff"></div>
<div class="t" style="left:743px;top:368px;letter-spacing:-0.15px">Zaawansowane</div>
<svg style="left:826px;top:373px" width="7" height="4" shape-rendering="crispEdges"><g fill="#000"><rect x="0" y="0" width="7" height="1"/><rect x="1" y="1" width="5" height="1"/><rect x="2" y="2" width="3" height="1"/><rect x="3" y="3" width="1" height="1"/></g></svg>

<!-- bottom buttons -->
<div class="raised" style="left:239px;top:529px;width:98px;height:25px"></div>
<div class="t" style="left:255px;top:535px;letter-spacing:-0.2px">Narzędzia</div>
<svg style="left:323px;top:539px" width="9" height="5" shape-rendering="crispEdges"><g fill="#000"><rect x="0" y="0" width="9" height="1"/><rect x="1" y="1" width="7" height="1"/><rect x="2" y="2" width="5" height="1"/><rect x="3" y="3" width="3" height="1"/><rect x="4" y="4" width="1" height="1"/></g></svg>
<div class="raised" style="left:390px;top:529px;width:98px;height:25px"></div>
<div class="t" style="left:406px;top:535px">Zarządzaj</div>
<svg style="left:474px;top:539px" width="9" height="5" shape-rendering="crispEdges"><g fill="#000"><rect x="0" y="0" width="9" height="1"/><rect x="1" y="1" width="7" height="1"/><rect x="2" y="2" width="5" height="1"/><rect x="3" y="3" width="3" height="1"/><rect x="4" y="4" width="1" height="1"/></g></svg>

<div class="raised" style="left:574px;top:529px;width:98px;height:25px"></div>
<div class="a" style="left:657px;top:530px;width:2px;height:23px;border-left:1px solid #808080;border-right:1px solid #fff"></div>
<svg style="left:577px;top:533px" width="16" height="16" viewBox="0 0 16 16"><rect x="0" y="0" width="16" height="16" rx="2" fill="#1F8A1F"/><path d="M3.5 5 V2.5 H12.5 V13.5 H3.5 V11" fill="none" stroke="#9CEB9C" stroke-width="1"/><rect x="4" y="3" width="8" height="10" fill="#238F23"/><path d="M2 7 H7 V4 L11 8 L7 12 V9 H2Z" fill="#E6FFE6"/></svg>
<div class="t" style="left:598px;top:535px">Logowanie</div>
<svg style="left:661px;top:540px" width="7" height="4" shape-rendering="crispEdges"><g fill="#000"><rect x="0" y="0" width="7" height="1"/><rect x="1" y="1" width="5" height="1"/><rect x="2" y="2" width="3" height="1"/><rect x="3" y="3" width="1" height="1"/></g></svg>
<div class="raised" style="left:678px;top:529px;width:82px;height:25px"></div>
<div class="t" style="left:700px;top:535px">Zamknij</div>
<div class="raised" style="left:766px;top:529px;width:82px;height:25px"></div>
<div class="t" style="left:790px;top:535px;letter-spacing:-0.3px">Pomoc</div>

<!-- status -->
<div class="t" style="left:6px;top:658px;font-size:10.5px">0 B z 0 B w 0 z 1</div>
<div class="t" style="left:487px;top:658px">5 ukrytych</div>
<div class="t" style="left:6px;top:680px">Nie połączony.</div>
<div class="a" style="left:0;top:697px;width:1089px;height:1px;background:#707070"></div>
<div class="a" style="left:0;top:698px;width:1089px;height:1px;background:#0E5A4A"></div>
<div class="a" style="left:0;top:699px;width:1089px;height:1px;background:#3A9A88"></div>
<!-- mouse cursor -->
<svg style="left:33px;top:9px" width="12" height="21" shape-rendering="crispEdges"><rect x="0" y="0" width="1" height="1" fill="#000"/><rect x="0" y="1" width="1" height="1" fill="#000"/><rect x="1" y="1" width="1" height="1" fill="#000"/><rect x="0" y="2" width="1" height="1" fill="#000"/><rect x="1" y="2" width="1" height="1" fill="#fff"/><rect x="2" y="2" width="1" height="1" fill="#000"/><rect x="0" y="3" width="1" height="1" fill="#000"/><rect x="1" y="3" width="1" height="1" fill="#fff"/><rect x="2" y="3" width="1" height="1" fill="#fff"/><rect x="3" y="3" width="1" height="1" fill="#000"/><rect x="0" y="4" width="1" height="1" fill="#000"/><rect x="1" y="4" width="1" height="1" fill="#fff"/><rect x="2" y="4" width="1" height="1" fill="#fff"/><rect x="3" y="4" width="1" height="1" fill="#fff"/><rect x="4" y="4" width="1" height="1" fill="#000"/><rect x="0" y="5" width="1" height="1" fill="#000"/><rect x="1" y="5" width="1" height="1" fill="#fff"/><rect x="2" y="5" width="1" height="1" fill="#fff"/><rect x="3" y="5" width="1" height="1" fill="#fff"/><rect x="4" y="5" width="1" height="1" fill="#fff"/><rect x="5" y="5" width="1" height="1" fill="#000"/><rect x="0" y="6" width="1" height="1" fill="#000"/><rect x="1" y="6" width="1" height="1" fill="#fff"/><rect x="2" y="6" width="1" height="1" fill="#fff"/><rect x="3" y="6" width="1" height="1" fill="#fff"/><rect x="4" y="6" width="1" height="1" fill="#fff"/><rect x="5" y="6" width="1" height="1" fill="#fff"/><rect x="6" y="6" width="1" height="1" fill="#000"/><rect x="0" y="7" width="1" height="1" fill="#000"/><rect x="1" y="7" width="1" height="1" fill="#fff"/><rect x="2" y="7" width="1" height="1" fill="#fff"/><rect x="3" y="7" width="1" height="1" fill="#fff"/><rect x="4" y="7" width="1" height="1" fill="#fff"/><rect x="5" y="7" width="1" height="1" fill="#fff"/><rect x="6" y="7" width="1" height="1" fill="#fff"/><rect x="7" y="7" width="1" height="1" fill="#000"/><rect x="0" y="8" width="1" height="1" fill="#000"/><rect x="1" y="8" width="1" height="1" fill="#fff"/><rect x="2" y="8" width="1" height="1" fill="#fff"/><rect x="3" y="8" width="1" height="1" fill="#fff"/><rect x="4" y="8" width="1" height="1" fill="#fff"/><rect x="5" y="8" width="1" height="1" fill="#fff"/><rect x="6" y="8" width="1" height="1" fill="#fff"/><rect x="7" y="8" width="1" height="1" fill="#fff"/><rect x="8" y="8" width="1" height="1" fill="#000"/><rect x="0" y="9" width="1" height="1" fill="#000"/><rect x="1" y="9" width="1" height="1" fill="#fff"/><rect x="2" y="9" width="1" height="1" fill="#fff"/><rect x="3" y="9" width="1" height="1" fill="#fff"/><rect x="4" y="9" width="1" height="1" fill="#fff"/><rect x="5" y="9" width="1" height="1" fill="#fff"/><rect x="6" y="9" width="1" height="1" fill="#fff"/><rect x="7" y="9" width="1" height="1" fill="#fff"/><rect x="8" y="9" width="1" height="1" fill="#fff"/><rect x="9" y="9" width="1" height="1" fill="#000"/><rect x="0" y="10" width="1" height="1" fill="#000"/><rect x="1" y="10" width="1" height="1" fill="#fff"/><rect x="2" y="10" width="1" height="1" fill="#fff"/><rect x="3" y="10" width="1" height="1" fill="#fff"/><rect x="4" y="10" width="1" height="1" fill="#fff"/><rect x="5" y="10" width="1" height="1" fill="#fff"/><rect x="6" y="10" width="1" height="1" fill="#fff"/><rect x="7" y="10" width="1" height="1" fill="#fff"/><rect x="8" y="10" width="1" height="1" fill="#fff"/><rect x="9" y="10" width="1" height="1" fill="#fff"/><rect x="10" y="10" width="1" height="1" fill="#000"/><rect x="0" y="11" width="1" height="1" fill="#000"/><rect x="1" y="11" width="1" height="1" fill="#fff"/><rect x="2" y="11" width="1" height="1" fill="#fff"/><rect x="3" y="11" width="1" height="1" fill="#fff"/><rect x="4" y="11" width="1" height="1" fill="#fff"/><rect x="5" y="11" width="1" height="1" fill="#fff"/><rect x="6" y="11" width="1" height="1" fill="#fff"/><rect x="7" y="11" width="1" height="1" fill="#000"/><rect x="8" y="11" width="1" height="1" fill="#000"/><rect x="9" y="11" width="1" height="1" fill="#000"/><rect x="10" y="11" width="1" height="1" fill="#000"/><rect x="11" y="11" width="1" height="1" fill="#000"/><rect x="0" y="12" width="1" height="1" fill="#000"/><rect x="1" y="12" width="1" height="1" fill="#fff"/><rect x="2" y="12" width="1" height="1" fill="#fff"/><rect x="3" y="12" width="1" height="1" fill="#fff"/><rect x="4" y="12" width="1" height="1" fill="#000"/><rect x="5" y="12" width="1" height="1" fill="#fff"/><rect x="6" y="12" width="1" height="1" fill="#fff"/><rect x="7" y="12" width="1" height="1" fill="#000"/><rect x="0" y="13" width="1" height="1" fill="#000"/><rect x="1" y="13" width="1" height="1" fill="#fff"/><rect x="2" y="13" width="1" height="1" fill="#fff"/><rect x="3" y="13" width="1" height="1" fill="#000"/><rect x="4" y="13" width="1" height="1" fill="#000"/><rect x="5" y="13" width="1" height="1" fill="#fff"/><rect x="6" y="13" width="1" height="1" fill="#fff"/><rect x="7" y="13" width="1" height="1" fill="#000"/><rect x="0" y="14" width="1" height="1" fill="#000"/><rect x="1" y="14" width="1" height="1" fill="#fff"/><rect x="2" y="14" width="1" height="1" fill="#000"/><rect x="5" y="14" width="1" height="1" fill="#000"/><rect x="6" y="14" width="1" height="1" fill="#fff"/><rect x="7" y="14" width="1" height="1" fill="#fff"/><rect x="8" y="14" width="1" height="1" fill="#000"/><rect x="0" y="15" width="1" height="1" fill="#000"/><rect x="1" y="15" width="1" height="1" fill="#000"/><rect x="5" y="15" width="1" height="1" fill="#000"/><rect x="6" y="15" width="1" height="1" fill="#fff"/><rect x="7" y="15" width="1" height="1" fill="#fff"/><rect x="8" y="15" width="1" height="1" fill="#000"/><rect x="0" y="16" width="1" height="1" fill="#000"/><rect x="6" y="16" width="1" height="1" fill="#000"/><rect x="7" y="16" width="1" height="1" fill="#fff"/><rect x="8" y="16" width="1" height="1" fill="#fff"/><rect x="9" y="16" width="1" height="1" fill="#000"/><rect x="6" y="17" width="1" height="1" fill="#000"/><rect x="7" y="17" width="1" height="1" fill="#fff"/><rect x="8" y="17" width="1" height="1" fill="#fff"/><rect x="9" y="17" width="1" height="1" fill="#000"/><rect x="7" y="18" width="1" height="1" fill="#000"/><rect x="8" y="18" width="1" height="1" fill="#fff"/><rect x="9" y="18" width="1" height="1" fill="#fff"/><rect x="10" y="18" width="1" height="1" fill="#000"/><rect x="7" y="19" width="1" height="1" fill="#000"/><rect x="8" y="19" width="1" height="1" fill="#fff"/><rect x="9" y="19" width="1" height="1" fill="#fff"/><rect x="10" y="19" width="1" height="1" fill="#000"/><rect x="8" y="20" width="1" height="1" fill="#000"/><rect x="9" y="20" width="1" height="1" fill="#000"/></svg>
</body></html>
